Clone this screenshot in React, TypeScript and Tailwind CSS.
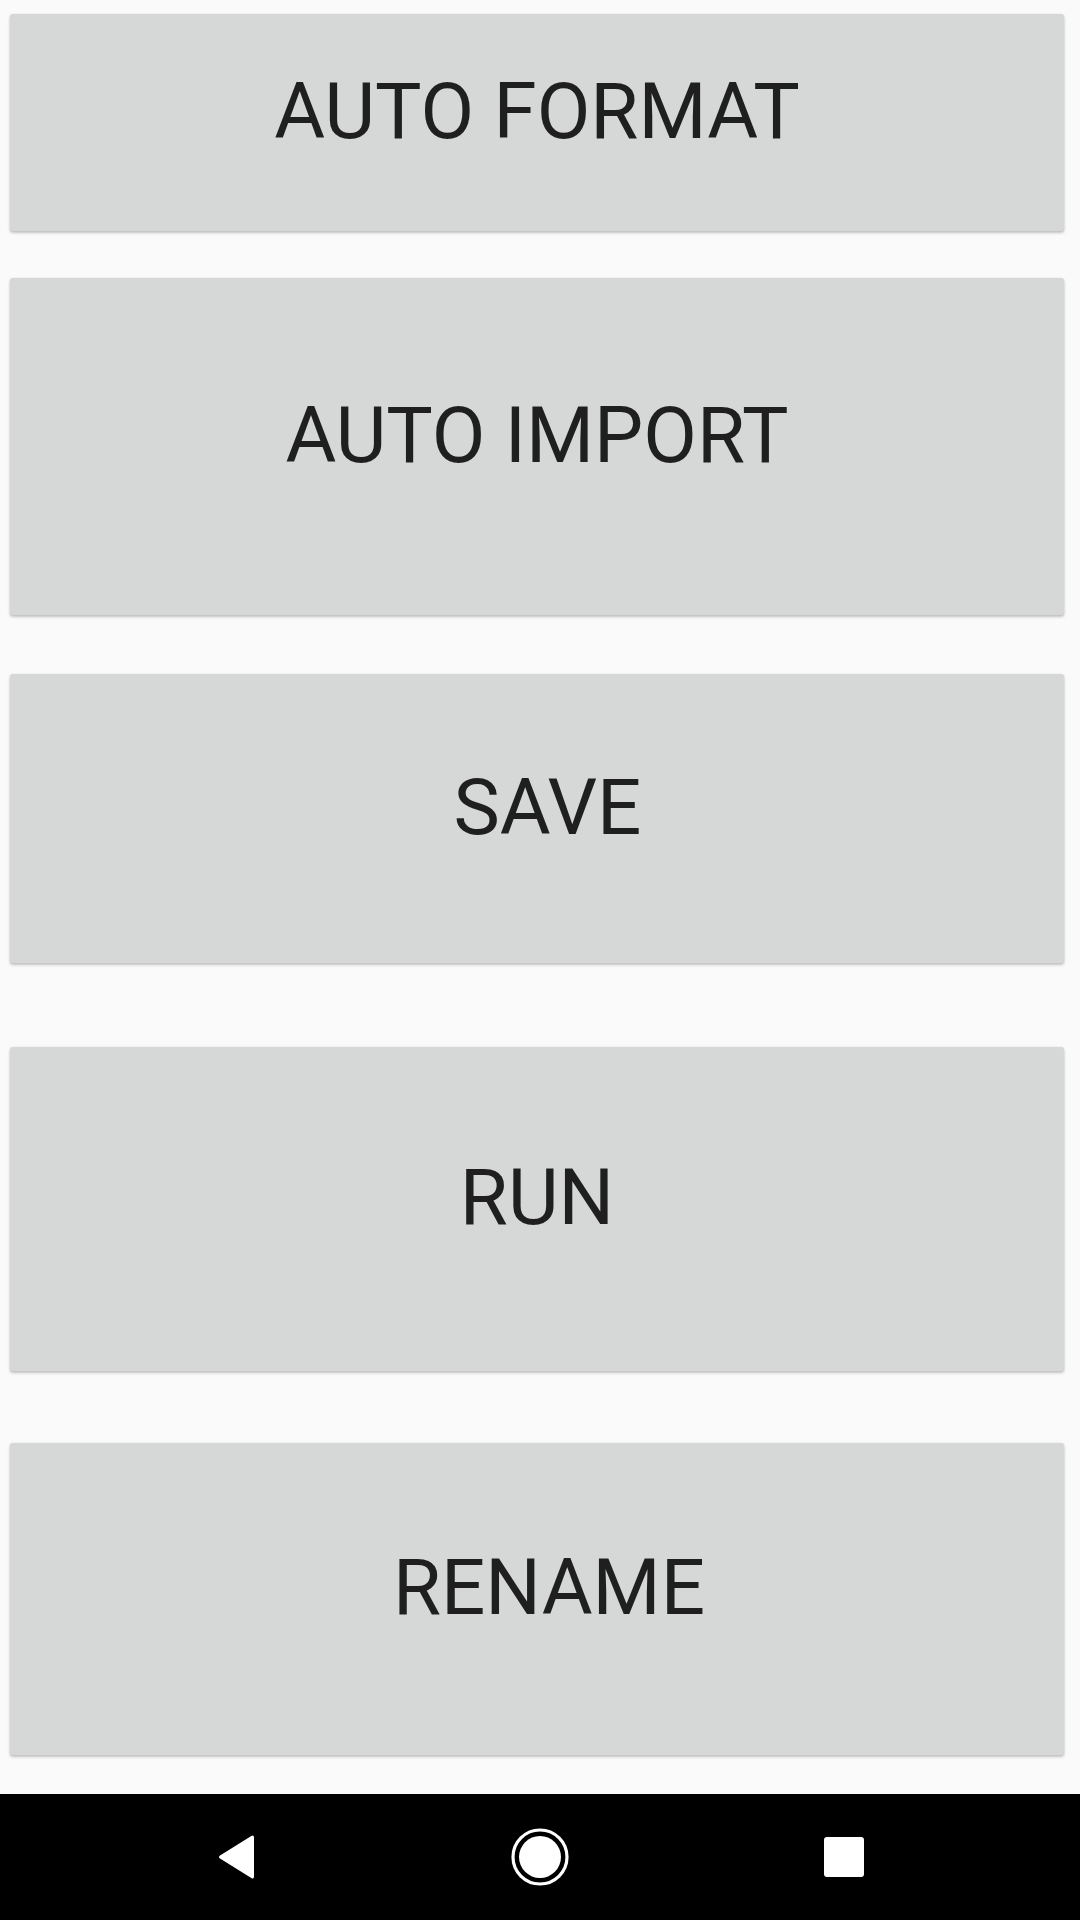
const buttons = [
   { label: "AUTO FORMAT", mt: "mt-[14px]", h: "h-[217px]", shift: "" },
   { label: "AUTO IMPORT", mt: "mt-[47px]", h: "h-[337px]", shift: "" },
   { label: "SAVE", mt: "mt-[59px]", h: "h-[289px]", shift: "pl-[21px]" },
   { label: "RUN", mt: "mt-[84px]", h: "h-[324px]", shift: "" },
   { label: "RENAME", mt: "mt-[72px]", h: "h-[312px]", shift: "pl-[24px]" },
];

const NavBar = () => {
   return (
      <div className="relative h-[126px] bg-black">
         {/* back */}
         <svg
            className="absolute left-[214px] top-[38px]"
            width="44"
            height="50"
            viewBox="0 0 44 50"
         >
            <path
               d="M40 5.5 L40 44.5 Q40 47.5 37.3 46 L6 26.6 Q4 25 6 23.4 L37.3 4 Q40 2.5 40 5.5 Z"
               fill="#fff"
            />
         </svg>
         {/* home */}
         <svg
            className="absolute left-[510px] top-[33px]"
            width="60"
            height="60"
            viewBox="0 0 60 60"
         >
            <circle cx="30" cy="30" r="27" fill="none" stroke="#fff" strokeWidth="3.2" />
            <circle cx="30" cy="30" r="21" fill="#fff" />
         </svg>
         {/* recents */}
         <div className="absolute left-[824px] top-[43px] h-[40px] w-[40px] rounded-[3px] bg-white" />
      </div>
   );
};

const App = () => {
   return (
      <div
         className="flex min-h-[1920px] w-[1080px] flex-col bg-[#fafafa]"
         style={{ fontFamily: "Roboto, 'Noto Sans', sans-serif" }}
      >
         <div className="flex h-[1794px] flex-col">
            {buttons.map((b, index) => (
               <div
                  key={index}
                  className={`${b.mt} ${b.h} ${b.shift} ml-[10px] mr-[16px] flex items-center justify-center rounded-[3px] bg-[#d6d7d7] pb-[22px] shadow-[0_2px_3px_rgba(0,0,0,0.22),0_0_2px_rgba(0,0,0,0.1)]`}
               >
                  <span className="text-[78px] leading-none font-normal text-[#1f1f1f]">
                     {b.label}
                  </span>
               </div>
            ))}
         </div>
         <NavBar />
      </div>
   );
};

export default App;
